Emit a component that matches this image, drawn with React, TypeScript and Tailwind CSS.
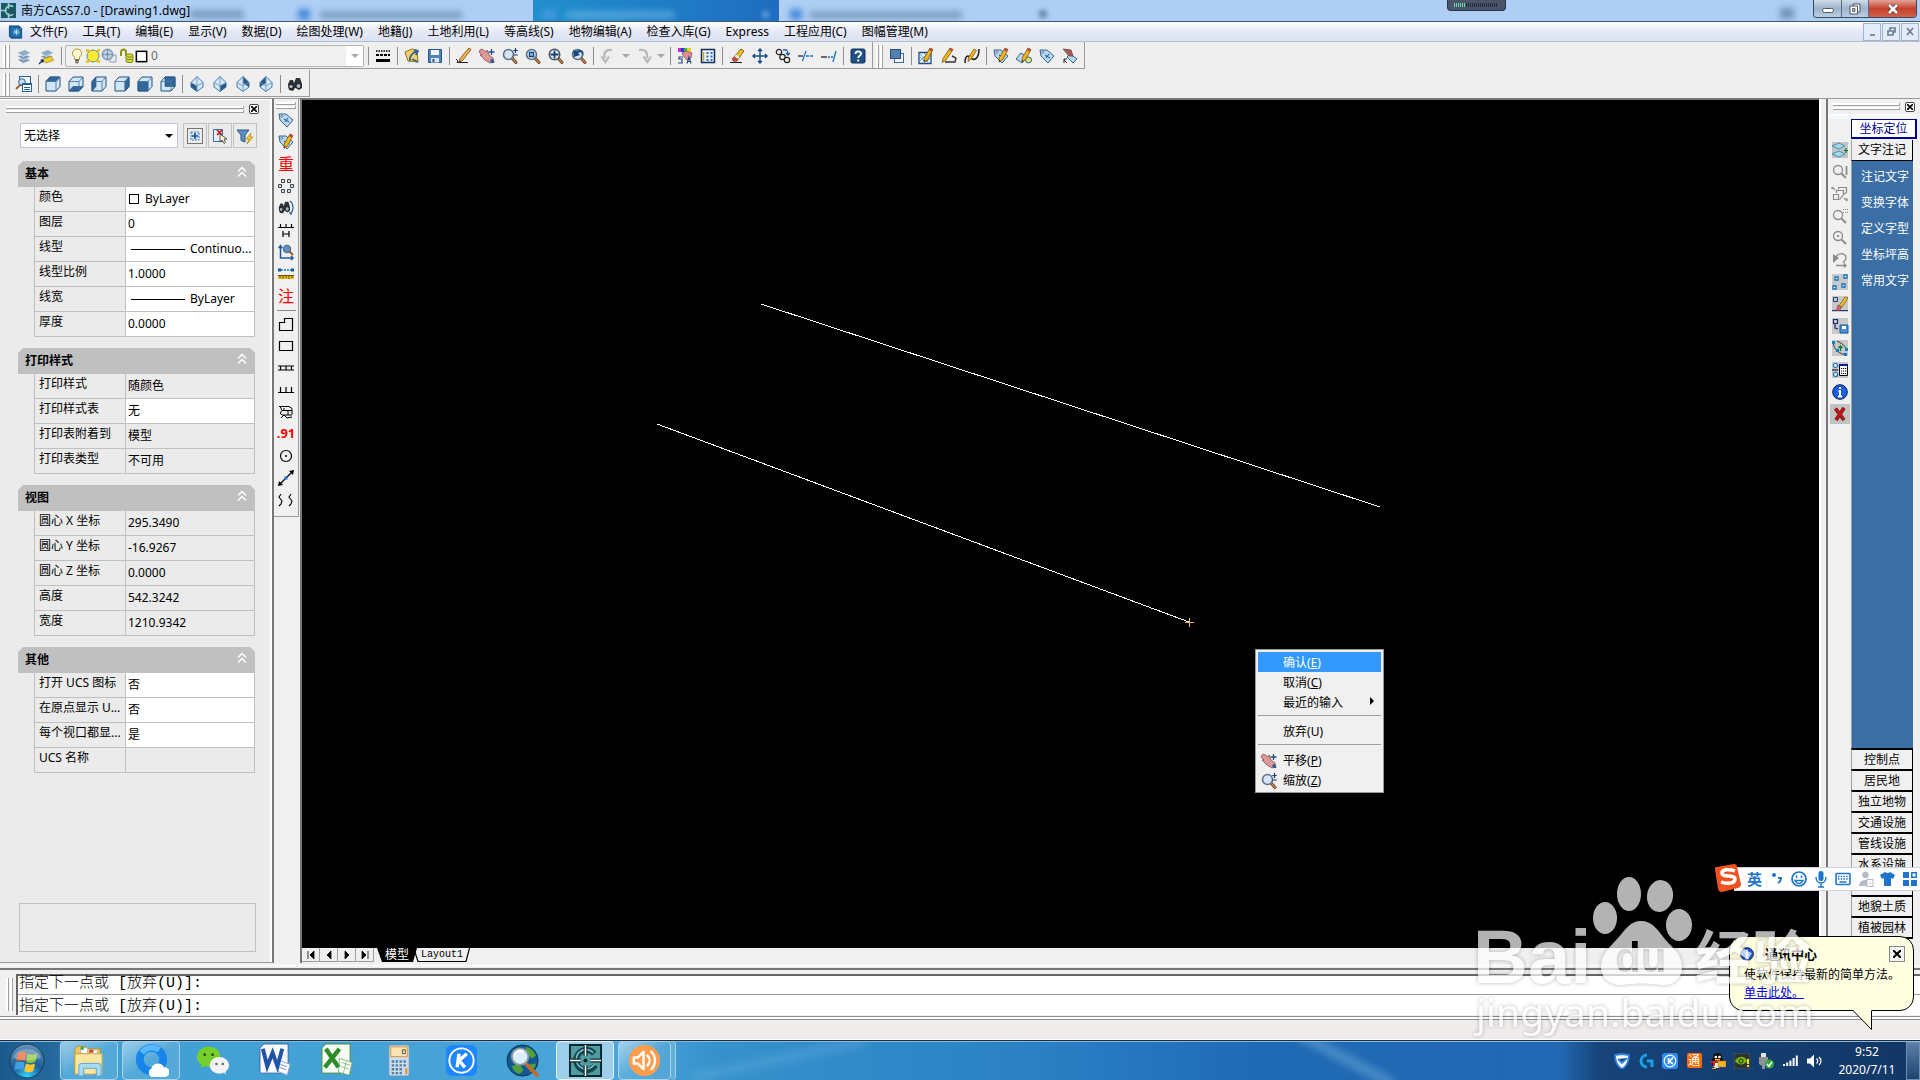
import { useState, type ReactNode } from 'react';

const mag = (
  <>
    <path d="M10 10l4 4.500" stroke="#6b3a1c" strokeWidth="3" strokeLinecap="round" />
    <path d="M10.500 10.500l3.500 4" stroke="#d08a4a" strokeWidth="1.200" strokeLinecap="round" />
    <circle cx="6.500" cy="6.500" r="5" fill="#d3e6f6" stroke="#5f7187" strokeWidth="1.600" />
  </>
);

const pencil = (
  <>
    <path d="M12 0l3 1.500L9.500 12l-3.500 2 .2-4z" fill="#f2b918" stroke="#7a5210" strokeWidth=".8" />
    <path d="M12 0l3 1.500-1.200 2.300-3-1.500z" fill="#b0504c" />
    <path d="M6 14l.3-2 1.400 1z" fill="#222" />
  </>
);

const tag = (
  <>
    <path d="M1 2l7 0 7 6-6 7-7-7z" fill="#b9d7ef" stroke="#33638f" />
    <circle cx="3.800" cy="4.300" r="1" fill="#fff" stroke="#33638f" strokeWidth=".7" />
    <path d="M6 7l5 3M7 10l3-4" stroke="#1b4f80" />
  </>
);

const pages = (
  <>
    <path d="M1 11.500l8-2 6 3-8 3z" fill="#7e98b6" stroke="#fff" strokeWidth=".6" />
    <path d="M1 8l8-2 6 3-8 3z" fill="#7e9cbd" stroke="#fff" strokeWidth=".6" />
    <path d="M1 4.500l8-3 6 3.500-8 3.500z" fill="#93acc7" stroke="#fff" strokeWidth=".6" />
  </>
);

const hand = (
  <path d="M1 2l2-1 4 3 1-2 2 5 4 3 1 4-4 1-5-3-5-5 2 0-3-3z" fill="#dc9a97" stroke="#8a4b50" strokeWidth=".8" />
);

const binocular = (
  <>
    <path d="M1 8l2-4 3 0 1 3 2-5 4 0 2 6 0 4-3 2-3-2-1 0-2 3-4-1z" fill="#2e3338" />
    <circle cx="4" cy="10.500" r="2.300" fill="#a7b3c2" stroke="#111" />
    <circle cx="11.500" cy="10" r="2.600" fill="#a7b3c2" stroke="#111" />
  </>
);

// cube: three faces, the dark one marks the view direction
function cube(dark: string) {
  return (
    <>
      <path d="M1 5.500L5 1h10v9.500L11 15H1z" fill="#d3e6f6" stroke="#1f527f" />
      <path d={dark} fill="#336699" stroke="#1f527f" strokeWidth=".6" />
      <path d="M1 5.500h10V15M11 5.500L15 1" fill="none" stroke="#4a79a5" strokeWidth=".9" />
    </>
  );
}

function diamond(dark: string) {
  return (
    <>
      <path d="M8 .5l6 6V11l-6 4.500L2 11V6.500z" fill="#d6e8f8" stroke="#4579a8" />
      <path d={dark} fill="#2b5a88" />
      <path d="M2 6.500L8 10l6-3.500M8 10v5.500M8 .5V10" fill="none" stroke="#6d99c0" strokeWidth=".9" />
    </>
  );
}

const cross = 'M8 1v14M1 8h14M6 3l2-2 2 2M6 13l2 2 2-2M3 6L1 8l2 2M13 6l2 2-2 2';

const icons: Record<string, ReactNode> = {
  layers: pages,
  layerPrev: (
    <>
      {pages}
      <path d="M3 11.500l8-3 4 3.500-8 3z" fill="#f4cf2a" stroke="#a88100" strokeWidth=".6" />
      <path d="M0 16l4-4M1.500 12H4v2.500" stroke="#0a2a66" strokeWidth="1.200" fill="none" />
    </>
  ),
  bulb: (
    <>
      <path d="M8 1a4.300 4.300 0 0 0-2.500 8v2.500h5V9A4.300 4.300 0 0 0 8 1z" fill="#fffad0" stroke="#b59e3b" />
      <path d="M6 12.500h4M6.500 14.500h3" stroke="#555" strokeWidth="1.400" />
    </>
  ),
  sun: (
    <>
      <path d="M1 1h3v3H1zM12 1h3v3h-3zM1 12h3v3H1zM12 12h3v3h-3z" fill="#f0c61a" />
      <circle cx="8" cy="8" r="6" fill="#fde92e" stroke="#6b8f95" />
    </>
  ),
  freeze: (
    <>
      <path d="M9 7h6v7H9z" fill="#e8edf2" stroke="#8fa0b3" />
      <circle cx="6.500" cy="6.500" r="5.500" fill="#9db4cf" stroke="#8096b0" />
      <circle cx="6.500" cy="6.500" r="3" fill="none" stroke="#eef3f8" />
      <path d="M6.500 1v11M1 6.500h11" stroke="#7289a6" strokeWidth=".8" />
    </>
  ),
  lock: (
    <>
      <path d="M2 8V4a2.500 2.500 0 0 1 5 0v4" stroke="#8b9511" strokeWidth="2" fill="none" />
      <rect x="7" y="6" width="7" height="8.500" rx="2" fill="#d8dc3c" stroke="#7e860e" />
      <path d="M8 9h5M8 11.500h5" stroke="#7e860e" />
    </>
  ),
  swatch: <rect x="2.500" y="2.500" width="11" height="11" fill="#fff" stroke="#000" strokeWidth="1.600" />,
  linetype: (
    <>
      <path d="M1 3h14" stroke="#000" strokeWidth="1.500" strokeDasharray="1.500 1" />
      <path d="M1 7h14" stroke="#000" strokeWidth="2" strokeDasharray="3 1" />
      <path d="M1 12.500h14" stroke="#000" strokeWidth="3" />
    </>
  ),
  open: (
    <>
      <path d="M1 4l7-3 5 1 1 12-10-1z" fill="#f4d06a" stroke="#93741a" />
      <path d="M6 13C5 8 9 4 14 3M10 2l4 1-2 4M8 11l6 3" stroke="#336699" strokeWidth="1.800" fill="none" />
    </>
  ),
  save: (
    <>
      <path d="M1.500 1.500h13v13h-13z" fill="#4f84bd" stroke="#285586" />
      <path d="M4 2h8v5H4z" fill="#f4f8fc" />
      <path d="M4 10h8v4.500H4z" fill="#dbe7f2" />
      <path d="M5.500 11h2v3h-2z" fill="#285586" />
    </>
  ),
  pencil: (
    <>
      <path d="M13 0l2 1.500L7 12l-4 2.500 1-4z" fill="#f2b350" stroke="#7a4210" strokeWidth=".8" />
      <path d="M3 14.500l.6-2 1.400 1z" fill="#222" />
      <path d="M0 11l2 2-1 1.500h11" stroke="#222" fill="none" />
    </>
  ),
  pan: (
    <>
      {hand}
      <path d="M12.500 1v6M9.500 4h6" stroke="#1d4f85" strokeWidth="1.300" />
      <path d="M11 12l3-1 1.500 4H12z" fill="#2c5f96" />
    </>
  ),
  zoomRt: (
    <>
      {mag}
      <path d="M13.500 0v5M11.300 2.500h4.500M11.300 7h4.500" stroke="#1d3f75" strokeWidth="1.200" />
    </>
  ),
  zoomWin: (
    <>
      {mag}
      <path d="M4.500 4.500h4v4h-4z" fill="#9cc2e6" stroke="#16467a" strokeWidth="1.300" />
    </>
  ),
  zoomExt: (
    <>
      {mag}
      <circle cx="6.500" cy="6.500" r="5.200" fill="#e7f0f8" stroke="#4c5b6c" strokeWidth="1.500" />
      <path d="M6.500 2.500v8M2.500 6.500h8" stroke="#1a3e6e" strokeWidth="1.800" />
    </>
  ),
  zoomPrev: (
    <>
      {mag}
      <path d="M2 2l1 7 6-2-2-2c3-2 5 0 5 3 2-4-1-8-7-5z" fill="#17467c" />
    </>
  ),
  undo: <path d="M12 2C6 1 3 5 5 10M1.500 8.500L5.500 14 9 8.500" stroke="#b7b9bc" strokeWidth="2.200" fill="none" />,
  redo: <path d="M3 2c6-1 9 2 8 8M7.500 8.500l4 5.500L15 8.500" stroke="#b7b9bc" strokeWidth="2.200" fill="none" />,
  props: (
    <>
      <path d="M1 0h3v4H1z" fill="#e020d0" />
      <path d="M4 0h3v4H4z" fill="#2638e8" />
      <path d="M7 0h3v4H7z" fill="#1fc03a" />
      <path d="M10 0h4v4h-4z" fill="#f0d020" />
      <path d="M5 5l4-2 6 2-1 5-4 2-3-3z" fill="#dc8f96" stroke="#8c4850" strokeWidth=".7" />
      <path d="M6 9H2v2h3v4H1M10 15.500l2-6.500 2 6.500M10.500 13.500h3" stroke="#244a80" strokeWidth="1.200" fill="none" />
    </>
  ),
  palette: (
    <>
      <rect x="1.500" y="1.500" width="13" height="13" fill="#e9f1f9" stroke="#102f60" strokeWidth="1.500" />
      <path d="M3.500 4v9" stroke="#c9a91a" strokeWidth="1.500" />
      <path d="M6.500 4h2v2h-2zM10.500 4h2v2h-2zM6.500 7.500h2v2h-2zM10.500 7.500h2v2h-2zM6.500 11h2v2h-2zM10.500 11h2v2h-2z" fill="#3b6ea8" />
    </>
  ),
  erase: (
    <>
      <path d="M1 14.500h12" stroke="#222" />
      <path d="M12 1l3 2-7 10H4.500L3 11z" fill="#f1bd25" stroke="#6d5415" strokeWidth=".8" />
      <path d="M5.500 8l3.500 3-1 2.500H4.500L3 11z" fill="#c04742" />
      <path d="M7 6.500l3.300 2.500-1.200 2L5.500 8.500z" fill="#e8edf4" />
    </>
  ),
  move: <path d={cross} stroke="#1d4f8c" strokeWidth="1.500" fill="none" />,
  copy: (
    <>
      <circle cx="4" cy="4" r="2.700" fill="none" stroke="#222" strokeWidth="1.200" />
      <circle cx="7.500" cy="9" r="2.700" fill="#eee" stroke="#222" strokeWidth="1.200" />
      <circle cx="12" cy="12" r="2.700" fill="#eee" stroke="#222" strokeWidth="1.200" />
      <path d="M8 2c4-1 5 1 5 5M11 5l2 2 2-2" stroke="#1a5fa8" strokeWidth="1.300" fill="none" />
    </>
  ),
  trim: (
    <>
      <path d="M0 8h5" stroke="#111" strokeWidth="1.200" />
      <path d="M8 8h8" stroke="#1774c8" strokeWidth="1.300" strokeDasharray="3 1" />
      <path d="M4.500 13L8 3" stroke="#1774c8" strokeWidth="1.200" />
    </>
  ),
  extend: (
    <>
      <path d="M0 9h6" stroke="#111" strokeWidth="1.200" />
      <path d="M7 9h5" stroke="#1774c8" strokeWidth="1.300" strokeDasharray="2 1" />
      <path d="M12 14l3-11" stroke="#1774c8" strokeWidth="1.300" />
    </>
  ),
  help: (
    <>
      <rect x="1" y="1" width="14" height="14" rx="1.500" fill="#1f4e86" stroke="#12315a" />
      <path d="M5.500 6c0-3.500 5.500-3.500 5.500-.3C11 7.700 8.200 8 8.200 10M8.200 11.500v2" stroke="#fff" strokeWidth="1.900" fill="none" />
    </>
  ),
  order: (
    <>
      <rect x="5.500" y="5.500" width="9" height="9" fill="#f3f7fb" stroke="#3c6a9a" />
      <rect x="1.500" y="1.500" width="10" height="9" fill="#557fae" stroke="#274e7c" />
    </>
  ),
  hatchEdit: (
    <>
      <path d="M1 4.500h12v11H1z" fill="#e4eef8" stroke="#1c4d80" strokeWidth="1.300" />
      <path d="M2 9l5 5M2 13l8-8M6 5l6 6M2 6l8 8M8 14l4-4" stroke="#5c8fc0" strokeWidth=".8" />
      {pencil}
    </>
  ),
  plineEdit: (
    <>
      <path d="M4 14h10l1-4-4-2" stroke="#333" fill="none" strokeWidth="1.400" />
      <path d="M9 0l3 1.500L5 12l-4 2.500 1-4z" fill="#f2b918" stroke="#7a5210" strokeWidth=".8" />
      <path d="M9 0l3 1.500-1.300 2.200L8 2z" fill="#b0504c" />
    </>
  ),
  splineEdit: (
    <>
      <path d="M1 15c0-8 3-8 6-5s8 1 8-9" stroke="#222" fill="none" strokeWidth="1.600" />
      <path d="M10 1l2.500 1.500L7 11l-3 2.500.5-4z" fill="#f2b918" stroke="#7a5210" strokeWidth=".8" />
    </>
  ),
  tagEdit: (
    <>
      {tag}
      {pencil}
    </>
  ),
  tagBlock: (
    <>
      <path d="M0 11l5-6 6 4-5 6z" fill="#b9d7ef" stroke="#33638f" />
      {pencil}
      <circle cx="12.500" cy="12" r="3" fill="#dfe36a" stroke="#33638f" />
    </>
  ),
  tag,
  tagSync: (
    <>
      <path d="M8 6l7 5-4 4-6-6z" fill="#b9d7ef" stroke="#33638f" />
      <path d="M1 1l8 1 2 6-4 0z" fill="#a55a58" stroke="#7c3c3c" strokeWidth=".8" />
      <path d="M2 12l3 3M2 15v-4h3" stroke="#222" fill="none" />
    </>
  ),
  namedView: (
    <>
      <rect x="3.500" y=".5" width="11" height="9" fill="#eef4fa" stroke="#2c5f96" />
      <circle cx="6" cy="6" r="3.300" fill="#c9def2" stroke="#2c5f96" />
      <path d="M4 9l-4 4" stroke="#a0622e" strokeWidth="2" />
      <rect x="6.500" y="7.500" width="9" height="8" fill="#fff" stroke="#2c5f96" />
      <path d="M6.500 8.500h9M8 11.500h6M8 13.500h6" stroke="#2c5f96" />
    </>
  ),
  cubeTop: cube('M1 5.500L5 1h10l-4 4.500z'),
  cubeBottom: cube('M1 15l4-4.500h10L11 15z'),
  cubeLeft: cube('M1 5.500L5 1v9.500L1 15z'),
  cubeRight: cube('M11 5.500L15 1v9.500L11 15z'),
  cubeFront: cube('M1 5.500h10V15H1z'),
  cubeBack: cube('M5 1h10v9.500H5z'),
  diaSW: diamond('M2 6.500L8 10v5.500L2 11z'),
  diaSE: diamond('M14 6.500L8 10v5.500l6-4.500z'),
  diaNE: diamond('M8 .5l6 6V11L8 7z'),
  diaNW: diamond('M8 .5l-6 6V11l6-4z'),
  binocular,
  array: (
    <path
      d="M3.500 1.500h3v3h-3zM9.500 1.500h3v3h-3zM.5 6.500h3v3h-3zM12.500 6.500h3v3h-3zM3.500 11.500h3v3h-3zM9.500 11.500h3v3h-3z"
      fill="#cfe0ee"
      stroke="#444"
    />
  ),
  camera: (
    <>
      <g transform="scale(.8 .9)">{binocular}</g>
      <path d="M12 1c4 3 4 10 0 13M12 14h2M12 14v-2" stroke="#3c6fa8" strokeWidth="1.300" fill="none" />
    </>
  ),
  fence: <path d="M0 5.500h16M2.500 2v3M8 2v3M13.500 2v3M5 9v6M11 9v6M5 12h6" stroke="#000" strokeWidth="1.200" fill="none" />,
  axis: (
    <>
      <path d="M2.500 2v12H15M.8 4l1.700-2.500L4.200 4M13 12l2 2-2 2" stroke="#1d5aa0" strokeWidth="1.500" fill="none" />
      <circle cx="9" cy="5" r="3.600" fill="#5b93c9" stroke="#5c6d80" strokeWidth="1.300" />
      <path d="M11.500 7.500L15 11" stroke="#9b5b28" strokeWidth="2" />
    </>
  ),
  ruler: (
    <>
      <path d="M0 4h16" stroke="#1774c8" strokeWidth="1.500" strokeDasharray="2 1" />
      <path d="M0 2.500h3v3H0zM13 2.500h3v3h-3z" fill="#135a9e" />
      <path d="M0 9h16v4H0z" fill="#e8bb1c" />
      <path d="M0 9.500h16M2 10v2M5 10v3M8 10v2M11 10v3M14 10v2" stroke="#6e5500" />
    </>
  ),
  polyBuild: <path d="M1.500 14.500v-8h5v-4h8v12z" fill="none" stroke="#000" strokeWidth="1.200" />,
  rect: <path d="M1.500 3.500h13v9h-13z" fill="none" stroke="#000" strokeWidth="1.200" />,
  ladder: <path d="M0 6h16M0 10h16M2.500 6v4M8 6v4M13.500 6v4" stroke="#000" strokeWidth="1.200" />,
  comb: <path d="M0 10.500h16M2.500 5v5M8 5v5M13.500 5v5" stroke="#000" strokeWidth="1.200" />,
  slope: <path d="M1 2.500h10l3 2M2 2.500l2 4h10M4 6.500L2 9l2 2h10M14 4.500v6M3 14l3-3 3 3 5-1M6 4v3M10 7v4" stroke="#000" fill="none" />,
  point: (
    <>
      <circle cx="8" cy="8" r="5.500" fill="none" stroke="#000" strokeWidth="1.200" />
      <path d="M7 8h2M8 7v2" stroke="#000" />
    </>
  ),
  lineTool: (
    <>
      <path d="M1 15L15 1" stroke="#000" strokeWidth="1.300" />
      <path d="M0 16l1-5 4 4zM16 0l-5 1 4 4z" fill="#000" />
      <path d="M6.500 6.500h3v3h-3z" fill="#1774c8" />
    </>
  ),
  waves: <path d="M3 2L1 5l3 4-1 3-2 2M13 2l-2 3 3 4-1 3-2 2" stroke="#000" fill="none" strokeWidth="1.100" />,
  // right hand column
  layerAdd: (
    <>
      <path d="M0 0h16v16H0z" fill="#c4c4c4" />
      <path d="M0 4l7-3 6 3-6 3zM0 12l7-3 6 3-6 3z" fill="#a5dbe6" stroke="#4b8fb5" />
      <path d="M14 6v5M12 8.500h4" stroke="#0a7a2c" strokeWidth="1.200" />
    </>
  ),
  gLens: (
    <>
      <circle cx="6" cy="6" r="4.500" fill="none" stroke="#8c8c8c" strokeWidth="1.300" />
      <path d="M9 9l5 5M14.500 2v9" stroke="#8c8c8c" strokeWidth="1.800" />
    </>
  ),
  gBoxes: (
    <path
      d="M1.500 8.500h5v5h-5zM4.500 7V4.500h7v4l-4 5M6.500 3.500v-2h8v5l-3 2M0 1l3 3M0 1v2M12 12l3 3M15 15v-3"
      stroke="#8c8c8c"
      fill="none"
      strokeWidth="1.200"
    />
  ),
  gLensGrid: (
    <>
      <circle cx="6" cy="7" r="4.500" fill="none" stroke="#8c8c8c" strokeWidth="1.300" />
      <path d="M9.500 10.500L14 15" stroke="#8c8c8c" strokeWidth="2" />
      <path d="M11 1.500h5M11 4.500h5" stroke="#8c8c8c" strokeDasharray="1 1" />
    </>
  ),
  gLensDot: (
    <>
      <circle cx="6" cy="6" r="4.500" fill="none" stroke="#8c8c8c" strokeWidth="1.300" />
      <path d="M9.500 9.500L14 14" stroke="#8c8c8c" strokeWidth="2" />
      <path d="M5 5h2v2H5z" fill="#8c8c8c" />
    </>
  ),
  gReturn: (
    <>
      <path d="M1 2v9l6-5z" fill="#8c8c8c" />
      <path d="M4 5c3-5 10-4 10 1 0 2-2 3-3 5M4 13.500h10M12 11.500l2 2-2 2" stroke="#8c8c8c" fill="none" strokeWidth="1.300" />
    </>
  ),
  nodes: (
    <>
      <path d="M0 0h16v16H0z" fill="#c8c8c8" />
      <path d="M3 3h3v3H3zM12 1h3v3h-3zM1 12h3v3H1zM10 10h3v3h-3z" fill="#fff" stroke="#0f6fc0" strokeWidth="1.300" />
    </>
  ),
  nodeErase: (
    <>
      <path d="M0 0h16v16H0z" fill="#c8c8c8" />
      <path d="M1.500 1.500h4v4h-4zM0 14.500h16" stroke="#1d3f75" fill="none" />
      <path d="M13 1l3 1-6 9-3-1z" fill="#f1bd25" stroke="#6d5415" strokeWidth=".7" />
      <path d="M6 9l3.500 2-2 3.500H4.500z" fill="#e06a68" stroke="#7c3c3c" strokeWidth=".7" />
    </>
  ),
  nodeSave: (
    <>
      <path d="M0 0h16v16H0z" fill="#c8c8c8" />
      <path d="M1.500 1.500h4v4h-4zM3 6v4l3 1" stroke="#1d2f75" fill="none" strokeWidth="1.200" />
      <path d="M8 7h8v8H8z" fill="#4d8ed0" stroke="#1c5a99" />
      <path d="M10 8h4v3h-4z" fill="#fff" />
    </>
  ),
  arcUp: (
    <>
      <path d="M0 0h16v16H0z" fill="#c8c8c8" />
      <path d="M1 2c1 8 6 12 14 13M5 1c5 2 8 5 10 9" stroke="#333" fill="none" />
      <path d="M0 1h3v3H0zM12 13h3v3h-3zM4 9h3v3H4zM13 8h3v3h-3z" fill="#0f7fc0" />
      <path d="M8.500 11V6M6.500 8l2-2 2 2" stroke="#0a7a2c" strokeWidth="1.300" fill="none" />
    </>
  ),
  nodeTable: (
    <>
      <path d="M0 0h16v16H0z" fill="#c8c8c8" />
      <circle cx="3.500" cy="3.500" r="2" fill="#fff" stroke="#0f6fc0" strokeWidth="1.200" />
      <circle cx="3.500" cy="12.500" r="2" fill="#fff" stroke="#0f6fc0" strokeWidth="1.200" />
      <path d="M0 8h6" stroke="#000" />
      <path d="M7.500 2.500h8v11h-8z" fill="#fff" stroke="#000" />
      <path d="M7 3h9" stroke="#0a1a9a" strokeWidth="2" />
      <path d="M9 6.500h6M9 9h6M9 11.500h6" stroke="#000" strokeDasharray="1.200 .8" />
    </>
  ),
  info: (
    <>
      <circle cx="8" cy="8" r="7.300" fill="#1c5fe0" stroke="#0a1a55" />
      <path d="M8 3v2M6.500 7H8v5.500M6 12.500h4" stroke="#fff" strokeWidth="1.900" fill="none" />
    </>
  ),
  redX: (
    <>
      <path d="M-2-2h20v20H-2z" fill="#c2c2c2" />
      <path d="M4 14L12 2M3.500 2.500L12 14" stroke="#5c0808" strokeWidth="3.600" />
      <path d="M4 13.500L12 2M3.500 2.500L12 13.500" stroke="#c81414" strokeWidth="2.200" />
    </>
  ),
  // palette buttons
  quickAdd: (
    <>
      <path d="M.5 .5h15v15H.5z" fill="none" stroke="#000" strokeDasharray="1 1" />
      <path d="M4 4h8v8H4z" fill="#cfe2f4" stroke="#4a7fb5" strokeDasharray="2 1" />
      <path d="M8 5v6M5 8h6" stroke="#1d4f8c" strokeWidth="1.600" />
    </>
  ),
  pickCursor: (
    <>
      <path d="M1.500 1.500h9v12h-9z" fill="#e7f0f8" stroke="#3b6ea8" />
      <path d="M5 2l5 5M10 2L5 7" stroke="#d01010" strokeWidth="1.600" />
      <path d="M8 6v8l2-2 2 3.500 1.500-1L12 11h3z" fill="#fffbd0" stroke="#333" strokeWidth=".8" />
    </>
  ),
  filter: (
    <>
      <path d="M0 2h12L8 7v7l-4-1.500V7z" fill="#5d8fc0" stroke="#2c5880" />
      <path d="M14 5l-5 6h3l-2 5 6-7h-3z" fill="#f7cf20" stroke="#a8830d" strokeWidth=".7" />
    </>
  ),
};

function Icon({ name, size = 'h-4 w-4' }: { name: string; size?: string }) {
  return (
    <svg viewBox="0 0 16 16" fill="none" className={`${size} shrink-0 overflow-visible`} aria-hidden="true">
      {icons[name]}
    </svg>
  );
}

function ToolButton({ name }: { name: string }) {
  return (
    <button type="button" aria-label={name} className="flex h-full w-[23px] shrink-0 items-center justify-center">
      <Icon name={name} />
    </button>
  );
}

const Sep = () => (
  <div className="flex w-[6px] shrink-0 justify-center">
    <div className="h-[18px] w-px bg-[#8c8c8c]" />
  </div>
);

const Grip = () => (
  <div className="flex h-[23px] w-[12px] shrink-0 items-center gap-px pl-[3px]">
    <div className="h-full w-[3px] border-r border-[#a0a0a0] bg-white" />
    <div className="h-full w-[3px] border-r border-[#a0a0a0] bg-white" />
  </div>
);

const ToolGroup = ({ items }: { items: string[] }) => (
  <>{items.map((n, i) => (n === '|' ? <Sep key={i} /> : <ToolButton key={i} name={n} />))}</>
);

const Toolbar = ({ children }: { children: ReactNode }) => (
  <div className="flex h-[27px] items-center border-r border-b border-[#9a9a9a] pt-[2px] pr-[3px]">
    <Grip />
    {children}
  </div>
);

const DownMark = () => <div className="border-x-4 border-t-4 border-x-transparent border-t-[#a8a8a8]" />;

const menus = [
  '文件(F)', '工具(T)', '编辑(E)', '显示(V)', '数据(D)', '绘图处理(W)', '地籍(J)', '土地利用(L)', '等高线(S)',
  '地物编辑(A)', '检查入库(G)', 'Express', '工程应用(C)', '图幅管理(M)',
];

function TitleBar() {
  return (
    <div className="relative flex h-[22px] items-center overflow-hidden border-b border-[#42556e] bg-[#aecff3] pl-px">
      {/* browser tabs seen through the glass */}
      <div className="absolute inset-y-0 left-[533px] w-[246px] bg-gradient-to-r from-[#2190cc] to-[#1f6cc0]" />
      <div className="absolute top-[10px] left-[190px] h-[9px] w-[54px] bg-[#5f7fa3] opacity-60 blur-[3px]" />
      <div className="absolute top-[9px] left-[298px] h-[11px] w-[12px] bg-[#2d78d8] opacity-80 blur-[3px]" />
      <div className="absolute top-[11px] left-[320px] h-[8px] w-[142px] bg-[#5f7fa3] opacity-60 blur-[3px]" />
      <div className="absolute top-[9px] left-[542px] h-[11px] w-[14px] bg-[#4c9ee8] opacity-70 blur-[3px]" />
      <div className="absolute top-[11px] left-[566px] h-[8px] w-[108px] bg-[#7cc4ea] opacity-50 blur-[3px]" />
      <div className="absolute top-[11px] left-[762px] h-[7px] w-[7px] bg-[#7cb4e6] opacity-60 blur-[2px]" />
      <div className="absolute top-[9px] left-[790px] h-[11px] w-[12px] bg-[#2d78d8] opacity-80 blur-[3px]" />
      <div className="absolute top-[11px] left-[810px] h-[8px] w-[152px] bg-[#5f7fa3] opacity-60 blur-[3px]" />
      <div className="absolute top-[10px] left-[1039px] h-[8px] w-[8px] bg-[#3f5f83] opacity-60 blur-[2px]" />
      <div className="absolute top-[8px] right-[126px] h-[11px] w-[14px] bg-[#56799f] opacity-70 blur-[3px]" />
      <svg viewBox="0 0 16 16" className="relative h-[15px] w-[15px]">
        <path d="M0 0h16v16H0z" fill="#1c5a63" />
        <path d="M13 4a5 5 0 1 0 0 8M8 0v6M0 8h6M8 16v-5" stroke="#9fd0d3" strokeWidth="1.600" fill="none" />
      </svg>
      <h1 className="relative ml-[5px] pt-px text-[12px] text-black">南方CASS7.0 - [Drawing1.dwg]</h1>

      {/* network meter */}
      <div className="absolute top-0 right-[414px] flex h-[11px] w-[59px] items-start gap-px rounded-b border border-t-0 border-[#2b3346] bg-[#4a556b] px-[6px] pt-[3px]">
        {Array.from({ length: 22 }, (_, i) => (
          <div key={i} className={`h-[4px] w-px ${i < 6 ? 'bg-[#5fe0a8]' : 'bg-[#252c3a]'}`} />
        ))}
      </div>

      <div className="absolute top-0 right-[3px] flex h-[18px] overflow-hidden rounded-b border border-t-0 border-[#3c4a5e]">
        <button type="button" aria-label="最小化" className="flex w-[28px] items-center justify-center border-r border-[#5d6b80] bg-gradient-to-b from-[#cfdcec] via-[#9fb3cc] to-[#b9cde4]">
          <span className="mt-[3px] h-[5px] w-[12px] rounded-sm border border-[#4b5563] bg-white" />
        </button>
        <button type="button" aria-label="还原" className="flex w-[27px] items-center justify-center border-r border-[#5d6b80] bg-gradient-to-b from-[#cfdcec] via-[#9fb3cc] to-[#b9cde4]">
          <svg viewBox="0 0 12 12" className="h-3 w-3">
            <path d="M4 1h7v8H4z" fill="#fff" stroke="#4b5563" />
            <path d="M1 3h7.500v8H1z" fill="#fff" stroke="#4b5563" />
            <path d="M3.500 5.500h2.500v3H3.500z" fill="#9fb3cc" stroke="#4b5563" strokeWidth=".8" />
          </svg>
        </button>
        <button type="button" aria-label="关闭" className="flex w-[47px] items-center justify-center bg-gradient-to-b from-[#e3a398] via-[#c4402c] to-[#d2604a]">
          <svg viewBox="0 0 12 10" className="h-[10px] w-3">
            <path d="M2 1l8 8M10 1L2 9" stroke="#4b3030" strokeWidth="4" />
            <path d="M2 1l8 8M10 1L2 9" stroke="#fff" strokeWidth="2.600" />
          </svg>
        </button>
      </div>
    </div>
  );
}

function MenuBar() {
  return (
    <nav className="flex h-[20px] items-center border-b border-[#b4bcd4] bg-gradient-to-b from-white via-[#e6e9f6] to-[#dce1f4] pr-px">
      <svg viewBox="0 0 16 16" className="ml-2 h-[14px] w-[15px]">
        <path d="M1 1h11l3 3v11H3l-2-2z" fill="#1d6aa8" stroke="#12406c" />
        <path d="M9 4v8M5 8h8M6 5l6 6M12 5l-6 6" stroke="#bfe6ff" />
      </svg>
      <div className="ml-[7px] flex gap-[15px] pt-px">
        {menus.map((m) => (
          <button key={m} type="button" className="text-[12px] leading-[18px] whitespace-nowrap">
            {m}
          </button>
        ))}
      </div>
      <div className="ml-auto flex gap-px">
        {['M2 8h5', 'M1 4h5v4H1zM3 4V1h5v4H6', 'M1 1l6 7M7 1L1 8'].map((d, i) => (
          <button key={d} type="button" aria-label={['最小化', '还原', '关闭'][i]} className="flex h-[18px] w-[18px] items-center justify-center border border-[#9fb4cc] bg-[#e2ecf9]">
            <svg viewBox="0 0 9 9" className="h-[9px] w-[9px]">
              <path d={d} fill="none" stroke="#6d7f94" strokeWidth="1.700" />
            </svg>
          </button>
        ))}
      </div>
    </nav>
  );
}

function Toolbars() {
  return (
    <div className="bg-[#efefef]">
      <div className="flex h-[28px]">
        <Toolbar>
          <ToolGroup items={['layers', 'layerPrev', '|']} />
          <button type="button" aria-label="图层" className="mx-px flex h-[22px] w-[299px] items-center rounded-xs border border-[#b4b4b4] bg-[#f0f0f0] pl-[3px] text-[12px] text-[#6b6b6b]">
            <Icon name="bulb" />
            <Icon name="sun" />
            <Icon name="freeze" />
            <Icon name="lock" size="ml-[2px] h-4 w-4" />
            <Icon name="swatch" size="-ml-px h-[15px] w-[15px]" />
            <span className="ml-[2px]">0</span>
            <span className="ml-auto flex h-full w-[17px] items-center justify-center bg-white">
              <DownMark />
            </span>
          </button>
          <ToolGroup items={['|', 'linetype', '|', 'open', 'save', '|', 'pencil', 'pan', 'zoomRt', 'zoomWin', 'zoomExt', 'zoomPrev', '|', 'undo']} />
          <div className="flex w-[13px] justify-center"><DownMark /></div>
          <ToolButton name="redo" />
          <div className="flex w-[12px] justify-center"><DownMark /></div>
          <ToolGroup items={['|', 'props', 'palette', '|', 'erase', 'move', 'copy', 'trim', 'extend', '|', 'help']} />
        </Toolbar>
        <Toolbar>
          <ToolGroup items={['order', '|', 'hatchEdit', 'plineEdit', 'splineEdit', '|', 'tagEdit', 'tagBlock', 'tag', 'tagSync']} />
        </Toolbar>
      </div>
      <div className="flex h-[28px]">
        <Toolbar>
          <ToolGroup items={['namedView', '|', 'cubeTop', 'cubeBottom', 'cubeLeft', 'cubeRight', 'cubeFront', 'cubeBack', '|', 'diaSW', 'diaSE', 'diaNE', 'diaNW', '|', 'binocular']} />
        </Toolbar>
      </div>
    </div>
  );
}

interface Prop {
  label: string;
  value: string;
  kind?: 'swatch' | 'line';
  readOnly?: boolean;
}

const sections: { title: string; rows: Prop[] }[] = [
  {
    title: '基本',
    rows: [
      { label: '颜色', value: 'ByLayer', kind: 'swatch' },
      { label: '图层', value: '0' },
      { label: '线型', value: 'Continuo...', kind: 'line' },
      { label: '线型比例', value: '1.0000' },
      { label: '线宽', value: 'ByLayer', kind: 'line' },
      { label: '厚度', value: '0.0000' },
    ],
  },
  {
    title: '打印样式',
    rows: [
      { label: '打印样式', value: '随颜色', readOnly: true },
      { label: '打印样式表', value: '无' },
      { label: '打印表附着到', value: '模型', readOnly: true },
      { label: '打印表类型', value: '不可用', readOnly: true },
    ],
  },
  {
    title: '视图',
    rows: [
      { label: '圆心 X 坐标', value: '295.3490', readOnly: true },
      { label: '圆心 Y 坐标', value: '-16.9267', readOnly: true },
      { label: '圆心 Z 坐标', value: '0.0000', readOnly: true },
      { label: '高度', value: '542.3242', readOnly: true },
      { label: '宽度', value: '1210.9342', readOnly: true },
    ],
  },
  {
    title: '其他',
    rows: [
      { label: '打开 UCS 图标', value: '否' },
      { label: '在原点显示 U...', value: '否' },
      { label: '每个视口都显...', value: '是' },
      { label: 'UCS 名称', value: '', readOnly: true },
    ],
  },
];

const CloseBox = () => (
  <button type="button" aria-label="关闭" className="flex h-[10px] w-[10px] items-center justify-center rounded-xs border border-[#444] bg-white">
    <svg viewBox="0 0 6 6" className="h-[6px] w-[6px]">
      <path d="M0 0l6 6M6 0L0 6" stroke="#000" strokeWidth="1.600" />
    </svg>
  </button>
);

const PanelGrip = () => (
  <div className="flex h-[7px] flex-1 flex-col justify-between">
    <div className="h-[3px] border-r border-b border-[#a0a0a0] bg-white" />
    <div className="h-[3px] border-r border-b border-[#a0a0a0] bg-white" />
  </div>
);

function PropertiesPanel() {
  return (
    <aside className="flex w-[274px] shrink-0 flex-col border-t border-r-2 border-b border-t-[#9a9a9a] border-r-[#777] border-b-[#9a9a9a] bg-[#ebebeb]">
      <div className="flex min-h-0 flex-1 flex-col border-t border-r-2 border-white">
        <div className="mt-[4px] flex h-[10px] items-center gap-[5px] pr-[11px] pl-[6px]">
          <PanelGrip />
          <CloseBox />
        </div>
        <div className="mt-[9px] flex pl-[20px]">
          <select aria-label="选择" className="h-[25px] w-[158px] appearance-none border border-[#c3c3d6] bg-white pl-[3px] text-[12px] outline-none">
            <option>无选择</option>
          </select>
          <div className="pointer-events-none mt-[11px] -ml-[13px] h-0 border-x-4 border-t-4 border-x-transparent border-t-black" />
          {['quickAdd', 'pickCursor', 'filter'].map((n) => (
            <button key={n} type="button" aria-label={n} className="ml-px flex h-[25px] w-[24px] items-center justify-center border border-[#c2c2c2] first-of-type:ml-[10px]">
              <Icon name={n} />
            </button>
          ))}
        </div>
        <div className="mt-[13px] flex flex-col gap-[11px] pr-[15px] pl-[18px]">
          {sections.map((s) => (
            <section key={s.title}>
              <h2 className="flex h-[26px] items-center justify-between bg-[#c0c0c0] pr-[8px] pl-[7px] text-[12px] font-bold [clip-path:polygon(5px_0,calc(100%-5px)_0,100%_5px,100%_100%,0_100%,0_5px)]">
                {s.title}
                <svg viewBox="0 0 10 12" className="mb-[4px] h-3 w-[10px]">
                  <path d="M1 5.500l4-4 4 4M1 10.500l4-4 4 4" stroke="#fff" strokeWidth="1.500" fill="none" />
                </svg>
              </h2>
              <table className="ml-[16px] w-[221px] table-fixed border-separate border-spacing-0 border-l border-[#c0c0c0] text-[12px]">
                <colgroup>
                  <col className="w-[91px]" />
                  <col />
                </colgroup>
                <tbody>
                  {s.rows.map((r) => (
                    <tr key={r.label} className="h-[25px]">
                      <th scope="row" className="border-r border-b border-[#c0c0c0] pb-[4px] pl-[4px] text-left leading-[18px] font-normal whitespace-nowrap">
                        {r.label}
                      </th>
                      <td className={`border-r border-b border-[#c0c0c0] pl-[2px] leading-[18px] whitespace-nowrap ${r.readOnly ? '' : 'bg-white'}`}>
                        <div className="flex items-center">
                          {r.kind === 'swatch' && <span className="mr-[6px] ml-px h-[10px] w-[10px] border border-black" />}
                          {r.kind === 'line' && <span className="mr-[5px] ml-[3px] h-px w-[54px] bg-black" />}
                          {r.value}
                        </div>
                      </td>
                    </tr>
                  ))}
                </tbody>
              </table>
            </section>
          ))}
        </div>
        <div className="mt-auto mr-[14px] mb-[10px] ml-[19px] h-[49px] border border-[#c0c0c0]" />
      </div>
    </aside>
  );
}

const stripTools = [
  'tag', 'tagEdit', '重', 'array', 'camera', 'fence', 'axis', 'ruler', '注', '-', 'polyBuild', 'rect', 'ladder', 'comb',
  'slope', '.91', 'point', 'lineTool', 'waves',
];

function StripButton({ name }: { name: string }) {
  if (name === '-') return <div className="mt-[3px] mb-[2px] h-px w-[19px] bg-[#8c8c8c]" />;
  return (
    <button type="button" aria-label={name} className="flex h-[22px] w-full items-center justify-center">
      {icons[name] ? (
        <Icon name={name} />
      ) : (
        <span className={`text-[#f00] ${name === '.91' ? 'text-[13px] font-bold' : 'text-[16px]'}`}>{name}</span>
      )}
    </button>
  );
}

const menuGroups = [
  [
    { text: '确认', key: 'E' },
    { text: '取消', key: 'C' },
    { text: '最近的输入', sub: true },
  ],
  [{ text: '放弃', key: 'U', plain: true }],
  [
    { text: '平移', key: 'P', icon: 'pan' },
    { text: '缩放', key: 'Z', icon: 'zoomRt' },
  ],
] as { text: string; key?: string; icon?: string; sub?: boolean; plain?: boolean }[][];

function ContextMenu() {
  const [active, setActive] = useState('确认');
  return (
    <div role="menu" className="absolute top-[549px] left-[953px] w-[129px] border border-[#979797] bg-[#f0f0f0] p-[2px] text-[12px]">
      {menuGroups.map((group, i) => (
        <div key={i} className={i > 0 ? 'mt-[3px] border-t border-[#a0a0a0] pt-[5px]' : ''}>
          {group.map((item) => (
            <button
              key={item.text}
              type="button"
              role="menuitem"
              onMouseEnter={() => setActive(item.text)}
              className={`flex h-[20px] w-full items-center pt-[2px] ${active === item.text ? 'bg-[#3399ff] text-white' : ''}`}
            >
              <span className="flex w-[25px] justify-center pr-[3px]">{item.icon && <Icon name={item.icon} />}</span>
              {item.text}
              {item.key && (
                <span>
                  ({item.plain ? item.key : <u>{item.key}</u>})
                </span>
              )}
              {item.sub && <span className="mr-[7px] mb-[4px] ml-auto border-y-4 border-l-4 border-y-transparent border-l-black" />}
            </button>
          ))}
        </div>
      ))}
    </div>
  );
}

function DrawingArea() {
  return (
    <main className="flex min-w-0 flex-1 flex-col border-t-2 border-l-2 border-[#777]">
      <div className="relative min-h-0 flex-1 overflow-hidden bg-black">
        <svg className="absolute inset-0 h-full w-full" shapeRendering="crispEdges">
          <path d="M459 204L1078 407M355 324L887 522" stroke="#fff" fill="none" />
          <path d="M887.500 518v9M883 522.500h9" stroke="#f0b070" fill="none" />
        </svg>
        <ContextMenu />
      </div>
      <div className="mb-px flex h-[14px] shrink-0 bg-[#f0f0f0]">
        {['M2 1v8M8 1v8L4 5z', 'M7 1v8L3 5z', 'M3 1v8l4-4z', 'M2 1v8l4-4zM8 1v8'].map((d) => (
          <button key={d} type="button" aria-label="布局" className="flex w-[18px] items-center justify-center border-r border-b border-[#a0a0a0]">
            <svg viewBox="0 0 10 10" className="h-[10px] w-[10px]">
              <path d={d} fill="#000" stroke="#000" strokeWidth=".8" />
            </svg>
          </button>
        ))}
        <button type="button" className="ml-[3px] flex h-[14px] w-[40px] items-center justify-center bg-black text-[12px] leading-[14px] text-white [clip-path:polygon(0_0,100%_0,calc(100%-4px)_100%,5px_100%)]">
          模型
        </button>
        <button type="button" className="relative -ml-[3px] flex h-[14px] w-[56px] items-center justify-center text-[10px] leading-[14px] font-['Liberation_Mono',monospace]">
          <svg viewBox="0 0 56 14" className="absolute inset-0 h-[14px] w-[56px]">
            <path d="M0 1l4 12.500h48L55.500 0" fill="none" stroke="#000" strokeWidth="1.200" />
          </svg>
          Layout1
        </button>
      </div>
    </main>
  );
}

const sideTools = ['layerAdd', 'gLens', 'gBoxes', 'gLensGrid', 'gLensDot', 'gReturn', 'nodes', 'nodeErase', 'nodeSave', 'arcUp', 'nodeTable', 'info', 'redX'];
const textItems = ['注记文字', '变换字体', '定义字型', '坐标坪高', '常用文字'];
const categories = ['控制点', '居民地', '独立地物', '交通设施', '管线设施', '水系设施', '境界线', '地貌土质', '植被园林'];

function ScreenMenu() {
  return (
    <aside className="flex w-[101px] shrink-0 border-t border-[#9a9a9a] bg-[#f0f0f0]">
      <div className="w-[9px] border-r-2 border-l-2 border-l-white border-r-[#777]" />
      <div className="flex min-w-0 flex-1 flex-col">
        <div className="flex h-[16px] items-center gap-[5px] border-b border-white pr-[5px] pl-[5px]">
          <PanelGrip />
          <CloseBox />
        </div>
        <div className="flex min-h-0 flex-1 border-t-4 border-[#f4f7fc] pl-[2px]">
          <div className="flex w-[21px] flex-col items-center pt-[20px] pr-[2px]">
            {sideTools.map((n) => (
              <button key={n} type="button" aria-label={n} className="flex h-[22px] w-full items-center justify-center">
                <Icon name={n} />
              </button>
            ))}
          </div>
          <div className="flex w-[62px] flex-col text-[12px]">
            <button type="button" className="-mr-[4px] h-[20px] border-t border-r-2 border-b-2 border-l border-[#000090] bg-white leading-[16px] whitespace-nowrap text-[#000090]">
              坐标定位
            </button>
            <button type="button" className="mt-px mb-0 h-[21px] border-r border-b border-l border-black border-l-[#a0a0a0] leading-[20px]">
              文字注记
            </button>
            <div className="flex flex-1 flex-col items-end border-l border-[#a0a0a0] bg-[#3a6ea5] pt-[3px] pr-[4px] text-white">
              {textItems.map((t) => (
                <button key={t} type="button" className="h-[26px]">
                  {t}
                </button>
              ))}
            </div>
            {categories.map((c) => (
              <button key={c} type="button" className="h-[21px] shrink-0 border-t-2 border-r border-l border-black border-l-[#a0a0a0] leading-[19px]">
                {c}
              </button>
            ))}
            <div className="h-[26px] shrink-0 border-t-2 border-black" />
          </div>
        </div>
      </div>
    </aside>
  );
}

function CommandArea() {
  return (
    <div className="flex h-[77px] flex-col bg-[#f0f0f0]">
      <div className="mt-[2px] h-[5px] border-t border-b-2 border-t-white border-b-[#777]" />
      <div className="mt-[4px] flex h-[41px] items-stretch">
        <div className="flex w-[13px] shrink-0 items-center gap-px pl-[6px]">
          <div className="h-[33px] w-[3px] border-r border-[#a0a0a0] bg-white" />
          <div className="h-[33px] w-[3px] border-r border-[#a0a0a0] bg-white" />
        </div>
        <div className="ml-[3px] flex flex-1 flex-col border-t-2 border-l-2 border-[#666] bg-white pl-px font-['Liberation_Mono','Noto_Sans_CJK_SC',monospace] text-[15px] font-light">
          <p className="h-[22px] leading-[16px] whitespace-pre">指定下一点或 [放弃(U)]:</p>
          <label className="-ml-px flex flex-1 items-center border-t border-[#999] pt-[3px] pl-px leading-[14px] whitespace-pre">
            指定下一点或 [放弃(U)]:
            <input type="text" className="h-full flex-1 outline-none" />
          </label>
        </div>
      </div>
      <div className="mt-px h-[4px] border-y border-[#8c8c8c] bg-white" />
      <div className="mt-px flex-1 border-b border-white bg-[#f0eceb]" />
    </div>
  );
}

function StartOrb() {
  return (
    <svg viewBox="0 0 36 36" className="h-9 w-9">
      <defs>
        <radialGradient id="orb" cx=".5" cy=".95" r=".9">
          <stop offset="0" stopColor="#35d3ff" />
          <stop offset=".5" stopColor="#1a5c96" />
          <stop offset="1" stopColor="#5f8fb5" />
        </radialGradient>
      </defs>
      <circle cx="18" cy="18" r="17" fill="url(#orb)" stroke="#173d5e" />
      <path d="M9 10c3-2 6-1 8.500 0l-1.500 8c-3-1-6-1-9 0z" fill="#e9622c" />
      <path d="M18.500 10.500c3 1.500 7 1.500 10-.5l-2 8.500c-3 2-7 2-9.500.5z" fill="#8cc63e" />
      <path d="M6.500 19.500c3-1.500 6-1 9.200 0l-1.500 7.500c-3-1.500-6-1-9 0z" fill="#3f9fe0" />
      <path d="M17 20.500c3 1.500 6 1.500 9.200 0l-2 7.500c-3 2-6 1.500-9 0z" fill="#fbc62c" />
      <path d="M4 15C7 3 29 3 32 15c-8 3-20 3-28 0z" fill="#fff" opacity=".28" />
    </svg>
  );
}

const taskIcons: Record<string, ReactNode> = {
  explorer: (
    <>
      <path d="M3 6l3-3 8 1 3 2h12v25H3z" fill="#e9c765" stroke="#b38f2f" />
      <path d="M9 5h7v6H9zM18 7h8v5h-8z" fill="#fff" stroke="#999" strokeWidth=".6" />
      <path d="M9 4h3v3H9z" fill="#2fa34a" />
      <path d="M18 7h4v3h-4z" fill="#d43f2f" />
      <path d="M3 11h28v21H3z" fill="#f9e6a0" stroke="#c8a64a" />
      <path d="M7 34V24q0-3 3-3h17q3 0 3 3v10h-5v-8H12v8z" fill="#a9daf2" stroke="#5aa6cc" />
    </>
  ),
  qq: (
    <>
      <circle cx="18" cy="17" r="12" fill="none" stroke="#1684e8" strokeWidth="8" />
      <path d="M8 10a13 13 0 0 1 18-3" stroke="#56b8ff" strokeWidth="6" fill="none" />
      <path d="M18 35a5 5 0 0 1 0-9 7 7 0 0 1 13-1 5 5 0 0 1 1 10z" fill="#fff" />
    </>
  ),
  wechat: (
    <>
      <ellipse cx="13" cy="14" rx="12" ry="10.500" fill="#77cf2c" />
      <path d="M6 21l-1 5 6-3z" fill="#77cf2c" />
      <circle cx="9" cy="12" r="1.500" fill="#245c0d" />
      <circle cx="17" cy="12" r="1.500" fill="#245c0d" />
      <ellipse cx="24" cy="23" rx="10" ry="8.500" fill="#f1f3f5" />
      <path d="M28 29l3 4-1-6z" fill="#f1f3f5" />
      <circle cx="21" cy="21.500" r="1.300" fill="#666" />
      <circle cx="27.500" cy="21.500" r="1.300" fill="#666" />
    </>
  ),
  word: (
    <>
      <path d="M6 1h25v30H2V5z" fill="#f7fafd" stroke="#3666ad" />
      <path d="M22 18l11 4-3 11-10-4z" fill="#fff" stroke="#8aa8d6" />
      <path d="M23 22l7 2.500M22 25l7 2.500" stroke="#6b90cc" />
      <path d="M5 6l4.500 18L15 10l5 14 5-18" fill="none" stroke="#1f52a8" strokeWidth="4" />
    </>
  ),
  excel: (
    <>
      <path d="M6 1h25v30H2V5z" fill="#f4fbf2" stroke="#3f8a3a" />
      <path d="M20 16l13 4-3 13-11-3z" fill="#fff" stroke="#7db576" />
      <path d="M22 20l9 3M21 24l9 3M27 19l-3 12" stroke="#8cc483" />
      <path d="M6 6l13 19M20 6L5 25" stroke="#2e8b2b" strokeWidth="4.500" />
    </>
  ),
  calc: (
    <>
      <rect x="7" y="2" width="21" height="32" rx="2" fill="#c9dced" stroke="#6b92b5" />
      <rect x="9" y="4" width="17" height="10" fill="#fbe3b4" stroke="#d59a3c" />
      <path d="M21 7h3v4h-3z" fill="none" stroke="#555" />
      <path d="M10 19h16M10 23h16M10 27h12M10 31h12" stroke="#587ea3" strokeWidth="2.500" strokeDasharray="2.500 1.500" />
      <path d="M24 26h2v6h-2z" fill="#ef8c1c" />
    </>
  ),
  kugou: (
    <>
      <rect x="2" y="2" width="32" height="32" rx="6" fill="#1e86ff" />
      <circle cx="18" cy="18" r="12.500" fill="none" stroke="#fff" strokeWidth="2" />
      <path d="M15.500 11l-2 14M23.500 11l-8 7 6 7" fill="none" stroke="#fff" strokeWidth="3.500" />
    </>
  ),
  globe: (
    <>
      <circle cx="17" cy="18" r="16" fill="#145a92" stroke="#0d2f50" />
      <path d="M20 4c6 1 9 5 11 9l-5 3-4-5zM6 24l7-3 5 7-4 4c-4-1-7-4-8-8zM24 22l7-1c-1 4-3 7-6 9z" fill="#4fa23a" />
      <path d="M21 22l11 11" stroke="#c06a30" strokeWidth="4" strokeLinecap="round" />
      <circle cx="14.500" cy="14" r="8.500" fill="#d9effc" stroke="#8c9aa6" strokeWidth="2" />
      <path d="M9 12c2-4 6-5 9-3" stroke="#fff" strokeWidth="2" fill="none" />
    </>
  ),
  cass: (
    <>
      <path d="M2 2h32v32H2z" fill="#4f9ba1" stroke="#06282c" strokeWidth="2" />
      <path d="M27 11a10.500 10.500 0 1 0 1 12" fill="none" stroke="#12454c" strokeWidth="6" />
      <path d="M26 10a10 10 0 1 0 1 12" fill="none" stroke="#7fc5c9" strokeWidth="1.500" />
      <path d="M18 2v11M2 18h11M23 18h11M18 23v11" stroke="#06282c" strokeWidth="4" />
      <path d="M18 2v11M2 18h11M23 18h11M18 23v11" stroke="#fff" strokeWidth="1.600" />
      <circle cx="18" cy="18" r="2" fill="#06282c" />
    </>
  ),
  speaker: (
    <>
      <circle cx="18" cy="18" r="16" fill="#ff9d4d" />
      <path d="M7 15v6h4l6 6V9l-6 6z" fill="none" stroke="#fff" strokeWidth="2.500" strokeLinejoin="round" />
      <path d="M21 13c3 3 3 7 0 10M25 9c5 5 5 13 0 18" fill="none" stroke="#fff" strokeWidth="2.500" strokeLinecap="round" />
    </>
  ),
};

const trayIcons: ReactNode[] = [
  <path key="a" d="M1 2l7-1 7 1c0 7-2 11-7 14C3 13 1 9 1 2zM4 6l4 4 5-5" fill="#fff" stroke="#2f7fe0" strokeWidth="1.800" />,
  <path key="b" d="M9 2a6 6 0 1 0 0 12M9 8h5v6" fill="none" stroke="#18a0e8" strokeWidth="3" />,
  <g key="c">
    <rect width="16" height="16" rx="3" fill="#2d8cf5" />
    <circle cx="8" cy="8" r="5.800" fill="none" stroke="#fff" strokeWidth="1.200" />
    <path d="M6.500 5v6M11 5L7 8l4 3" fill="none" stroke="#fff" strokeWidth="1.600" />
  </g>,
  '通',
  <g key="e">
    <ellipse cx="7.500" cy="9" rx="6" ry="6.500" fill="#111" />
    <circle cx="7.500" cy="4.500" r="4.500" fill="#111" />
    <ellipse cx="7" cy="11.500" rx="4" ry="3.500" fill="#fff" />
    <circle cx="5.800" cy="4" r="1.300" fill="#fff" />
    <circle cx="9.500" cy="4" r="1.300" fill="#fff" />
    <path d="M1 8h10v2H5v3H3v-3H1z" fill="#d82020" />
    <path d="M8 8h8v6H8z" fill="#f5b52c" stroke="#a86b08" strokeWidth=".6" />
    <path d="M5 6h5v1.500H5zM2 15h4v1H2z" fill="#f5a91c" />
  </g>,
  <g key="f">
    <rect width="16" height="16" rx="1" fill="#2b3335" stroke="#778" strokeWidth=".6" />
    <path d="M1 8c4-6 10-5 12 0-3 4-8 5-12 0z" fill="#76b900" />
    <circle cx="7" cy="8" r="2" fill="none" stroke="#1c2b10" />
    <path d="M13 6h2v5h-2zM13 12h2v2h-2z" fill="#f4e01c" />
  </g>,
  <g key="g">
    <path d="M3 0h5v4H3z" fill="#e4e4e4" />
    <path d="M1 4h9v7l-3 2v3H4v-3l-3-2z" fill="#8c9296" />
    <circle cx="11.500" cy="11" r="4.500" fill="#2fa83c" />
    <path d="M9 11l2 2.200 3-4.200" stroke="#fff" strokeWidth="1.600" fill="none" />
  </g>,
  <path key="h" d="M1 11h2v2H1zM4.200 9.500h2V13h-2zM7.400 7.500h2V13h-2zM10.600 5h2v8h-2zM13.800 2.500h2V13h-2z" fill="#fff" />,
  <g key="i">
    <path d="M1 5.500v5h3l4 4v-13l-4 4z" fill="#fff" />
    <path d="M10.500 5.500c1.500 1.500 1.500 3.500 0 5M13 4c2.500 2.500 2.500 5.500 0 8" stroke="#fff" fill="none" strokeWidth="1.200" />
  </g>,
];

function Taskbar() {
  return (
    <footer className="relative flex h-10 shrink-0 items-center overflow-hidden border-t border-[#1c2f45] bg-[linear-gradient(90deg,#1c5a8c_0,#256b9e_58px,#3f9fd3_64px,#4aa5d8_620px,#3591cb_720px,#2a80c4_1040px,#1f6ab4_1260px,#2268b2_1560px,#164378_1600px,#123766_100%)] shadow-[inset_0_1px_0_#86b8da]">
      {/* light rays of the wallpaper */}
      <div className="pointer-events-none absolute top-[14px] left-[1290px] h-[7px] w-[110px] rotate-[28deg] bg-[#9fd0f2] opacity-50 blur-[5px]" />
      <div className="pointer-events-none absolute top-[15px] left-[690px] h-[6px] w-[180px] -rotate-12 bg-[#8fcaf0] opacity-35 blur-[5px]" />
      <button type="button" aria-label="开始" className="ml-[9px] flex w-[51px] items-center">
        <StartOrb />
      </button>
      {Object.keys(taskIcons).map((n) => (
        <button
          key={n}
          type="button"
          aria-label={n}
          className={`mr-[4px] flex h-[39px] items-center justify-center rounded-sm border ${n === 'speaker' ? 'w-[53px]' : 'w-[58px]'} ${
            n === 'cass'
              ? 'border-[#e8f4fc] bg-[#b4d9ef]/80'
              : n === 'explorer' || n === 'qq' || n === 'speaker'
                ? 'border-[#a8d3ec] bg-gradient-to-br from-white/50 via-white/10 to-white/10'
                : 'border-transparent'
          }`}
        >
          <svg viewBox="0 0 36 36" className="h-[35px] w-[35px]">{taskIcons[n]}</svg>
        </button>
      ))}
      <div className="-ml-[4px] h-[39px] w-[5px] rounded-r-sm border-r border-[#a8d3ec] bg-white/20" />
      <div className="ml-auto flex items-center gap-[8px]">
        {trayIcons.map((icon, i) => (
          <button key={i} type="button" aria-label={`托盘 ${i + 1}`} className="flex h-4 w-4 items-center justify-center">
            {typeof icon === 'string' ? (
              <span className="h-[15px] w-[15px] rounded-xs bg-[#ff6a00] text-[12px] leading-[15px] text-white">{icon}</span>
            ) : (
              <svg viewBox="0 0 16 16" className="h-4 w-4">{icon}</svg>
            )}
          </button>
        ))}
      </div>
      <div className="ml-[15px] w-[60px] text-center text-[12px] leading-[18px] text-white">
        <div>9:52</div>
        <div>2020/7/11</div>
      </div>
      <button type="button" aria-label="显示桌面" className="ml-[9px] h-[38px] w-[14px] border border-[#6f8fb0] bg-gradient-to-b from-[#5b7ea6] to-[#1c4470]" />
    </footer>
  );
}

function ImeBar() {
  const blue = '#1c74cc';
  return (
    <div className="absolute right-0 bottom-[189px] flex h-[24px] w-[186px] items-center border-y border-[#c8d4e0] bg-white pl-[13px]">
      <svg viewBox="0 0 28 28" className="absolute -top-[4px] -left-[20px] h-7 w-7">
        <path d="M1 5q-1-2 2-2L20 0q3 0 3 3l4 17q0 3-3 4L8 28q-3 0-4-3z" fill="#f0531f" />
        <path d="M21 7c-5-2-13-2-13 2 0 5 13 1 13 6 0 5-9 5-14 3" fill="none" stroke="#fff" strokeWidth="3.500" />
      </svg>
      <button type="button" className="mr-[10px] shrink-0 text-[15px] leading-[22px] font-bold text-[#1c74cc]">英</button>
      <svg viewBox="0 0 148 18" className="h-[18px] w-[148px] shrink-0" fill="none">
        <circle cx="2" cy="5" r="2" fill={blue} />
        <path d="M6 8h3c0 3-1 4-3 5" stroke={blue} strokeWidth="1.800" />
        <circle cx="27" cy="9" r="7" stroke={blue} strokeWidth="1.700" />
        <path d="M24.500 5.500v2.500M29.500 5.500v2.500M23 10.500c2 4 6 4 8 0z" stroke={blue} strokeWidth="1.500" />
        <rect x="46.500" y="1" width="5" height="10" rx="2.500" fill={blue} />
        <path d="M44 7c0 8 10 8 10 0M49 13v4M46 17h6" stroke={blue} strokeWidth="1.400" />
        <rect x="64" y="3.500" width="14" height="11" rx="1" stroke={blue} strokeWidth="1.600" />
        <path d="M66 6.500h10M66 9h10" stroke={blue} strokeWidth="1.500" strokeDasharray="1.500 1.200" />
        <path d="M67.500 12h7" stroke={blue} strokeWidth="1.500" />
        <circle cx="93.500" cy="5" r="3.200" fill="#b3bccb" />
        <path d="M87 16c0-8 13-8 13 0z" fill="#b3bccb" />
        <rect x="95" y="9.500" width="6" height="7" fill="#fff" stroke="#b3bccb" />
        <path d="M98 12v2" stroke="#b3bccb" />
        <path d="M108 5l5-3q3 2 5 0l5 3-2 4-2-1v8h-7V8l-2 1z" fill={blue} />
        <path d="M131 2h6v6h-6zM131 10h6v6h-6zM139 10h6v6h-6z" fill={blue} />
        <path d="M139.800 2.800h4.500v4.500h-4.500z" stroke={blue} strokeWidth="1.500" />
      </svg>
    </div>
  );
}

function Balloon() {
  return (
    <div role="status" className="absolute right-[6px] bottom-[69px] h-[75px] w-[185px] rounded-[14px] border border-black bg-[#ffffe1] text-[12px]">
      <div className="flex h-[34px] items-center pl-[10px]">
        <Icon name="info" size="h-[14px] w-[14px]" />
        <strong className="ml-[11px] text-[13px] leading-[18px]">通讯中心</strong>
        <button type="button" aria-label="关闭" className="mr-[8px] ml-auto flex h-4 w-4 items-center justify-center border border-[#888] bg-[#f4f4f4]">
          <svg viewBox="0 0 8 8" className="h-2 w-2"><path d="M0 0l8 8M8 0L0 8" stroke="#000" strokeWidth="2" /></svg>
        </button>
      </div>
      <p className="-mt-[5px] pl-[14px] leading-[18px] whitespace-nowrap">使软件保持最新的简单方法。</p>
      <a href="#" className="ml-[14px] block w-fit leading-[18px] text-[#0000ff] underline">单击此处。</a>
      <svg viewBox="0 0 20 21" className="absolute top-[73px] left-[123px] h-[21px] w-5">
        <path d="M0 0l19 20V0z" fill="#ffffe1" />
        <path d="M0 .5l18.500 19V.5" fill="none" stroke="#000" />
      </svg>
    </div>
  );
}

function Watermark() {
  return (
    <svg
      viewBox="0 0 360 175"
      className="pointer-events-none absolute right-[90px] bottom-[35px] h-[175px] w-[360px] opacity-70 drop-shadow-[0_0_2px_#00000066]"
      fill="#fff"
    >
      <mask id="pad">
        <path d="M0 0h360v175H0z" />
        <text x="145" y="102" fill="#000" className="font-['Liberation_Sans',sans-serif] text-[42px] font-bold">du</text>
      </mask>
      <ellipse cx="135" cy="48" rx="12" ry="16" />
      <ellipse cx="159" cy="24" rx="12" ry="17" />
      <ellipse cx="190" cy="26" rx="13" ry="16" transform="rotate(8 190 26)" />
      <ellipse cx="209" cy="55" rx="13" ry="16" />
      <path
        mask="url(#pad)"
        d="M171 51c11 0 16 8 23 17 8 10 18 15 18 29 0 13-10 19-21 18-14-2-26-2-38 0-12 1-22-6-22-18 0-13 8-19 17-29 8-9 12-17 23-17z"
      />
      <text x="3" y="113" className="font-['Liberation_Sans',sans-serif] text-[76px] font-bold">Bai</text>
      <text x="225" y="109" className="font-['Noto_Sans_CJK_SC',sans-serif] text-[58px] font-bold">经验</text>
      <text x="6" y="157" className="font-['Noto_Sans',sans-serif] text-[39px]">jingyan.baidu.com</text>
    </svg>
  );
}

export default function App() {
  return (
    <div className="relative flex h-screen flex-col overflow-hidden bg-[#f0f0f0] font-['Noto_Sans','Noto_Sans_CJK_SC',sans-serif] text-[12px] text-black">
      <TitleBar />
      <MenuBar />
      <Toolbars />
      <div className="flex min-h-0 flex-1">
        <PropertiesPanel />
        <div className="w-[26px] shrink-0 border-t border-[#9a9a9a]">
          <div className="mr-px flex flex-col items-center border-r border-b border-[#9a9a9a] pt-[3px] pb-[5px]">
            <div className="flex w-[20px]">
              <PanelGrip />
            </div>
            {stripTools.map((n) => (
              <StripButton key={n} name={n} />
            ))}
          </div>
        </div>
        <DrawingArea />
        <ScreenMenu />
      </div>
      <CommandArea />
      <Taskbar />
      <Balloon />
      <Watermark />
      <ImeBar />
    </div>
  );
}
